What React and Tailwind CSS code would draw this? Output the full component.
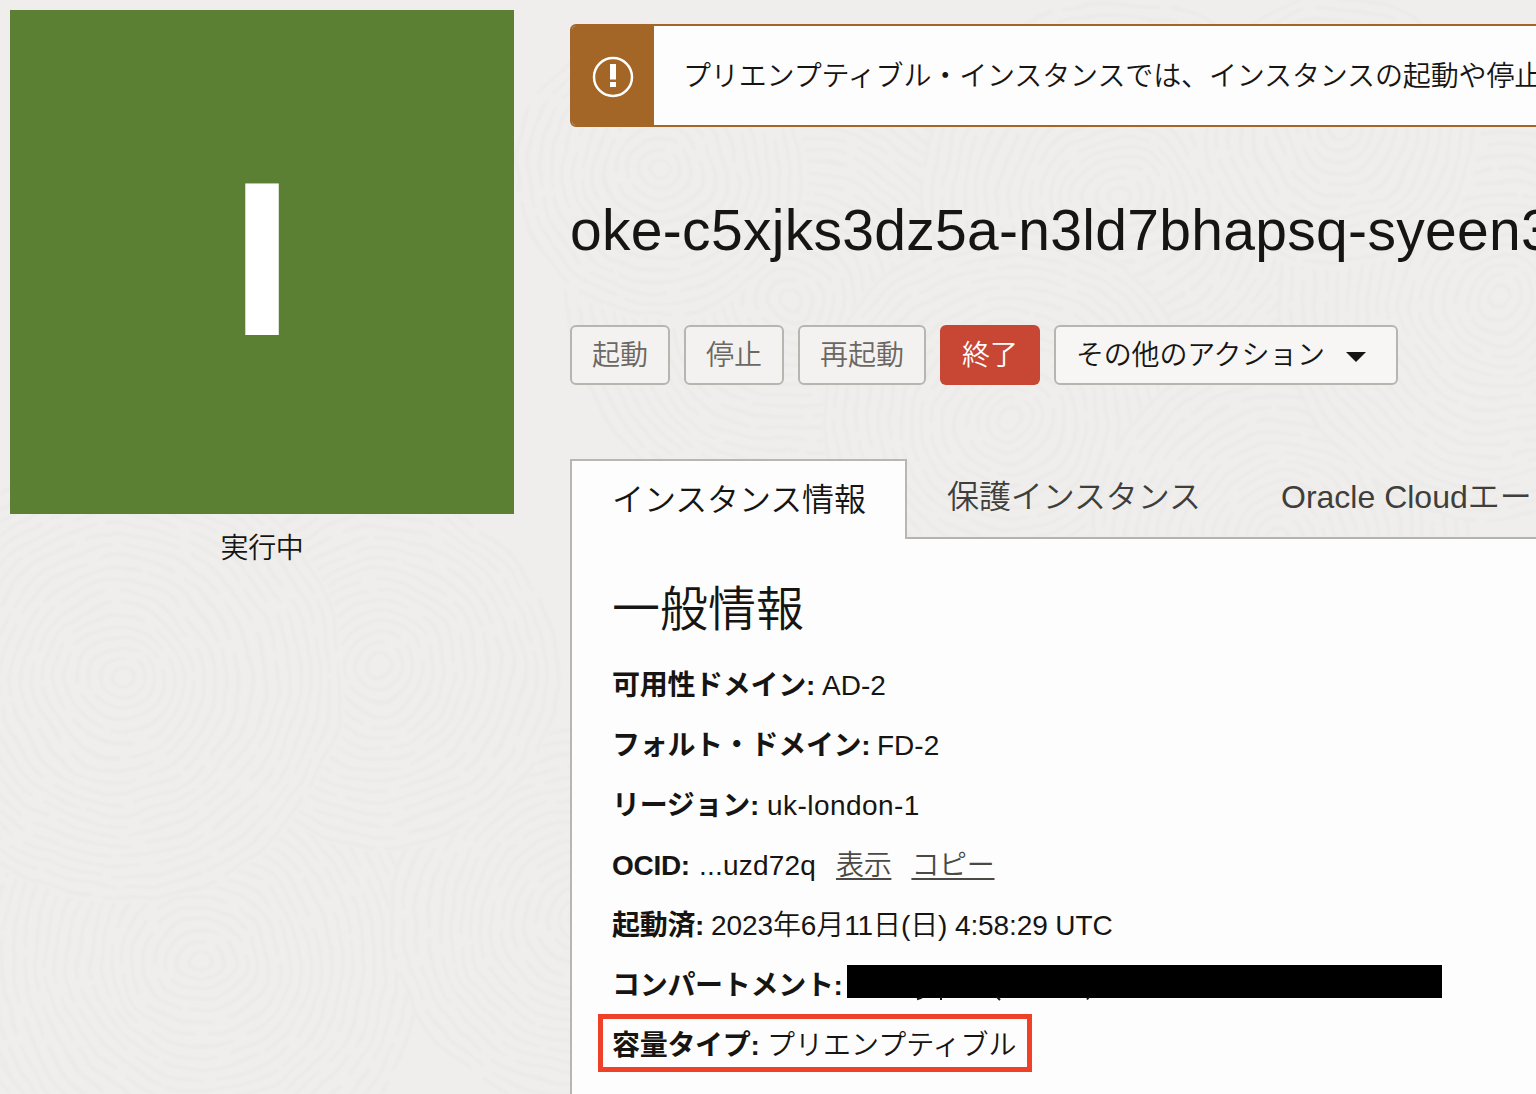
import React from 'react';

const actions = [
    { label: '起動', width: 'w-[100px]' },
    { label: '停止', width: 'w-[100px]' },
    { label: '再起動', width: 'w-[128px]' },
];

const details = [
    { label: '可用性ドメイン:', value: 'AD-2', labelClass: 'w-[203px]' },
    { label: 'フォルト・ドメイン:', value: 'FD-2', labelClass: 'w-[258px]' },
    { label: 'リージョン:', value: 'uk-london-1', labelClass: 'w-[148px]', valueClass: 'tracking-[0.45px]' },
    { label: 'OCID:', value: '...uzd72q', labelClass: 'w-[80px]', valueClass: 'tracking-[0.2px]', links: ['表示', 'コピー'] },
    { label: '起動済:', value: '2023年6月11日(日) 4:58:29 UTC', labelClass: 'w-[92px]', valueClass: 'tracking-[-0.1px]' },
    { label: 'コンパートメント:', labelClass: 'w-[228px]', redacted: true },
    { label: '容量タイプ:', value: 'プリエンプティブル', labelClass: 'w-[148px]', highlighted: true },
];

// Later swirls cover earlier ones, like overlapping scales
const swirls = [
    { x: 90, y: 1000, r: 240 },
    { x: 200, y: 960, r: 220 },
    { x: 790, y: 300, r: 230 },
    { x: 1120, y: 200, r: 200 },
    { x: 1010, y: 420, r: 190 },
    { x: 1280, y: 540, r: 190 },
    { x: 1500, y: 300, r: 220 },
    { x: 660, y: 170, r: 150 },
    { x: 1340, y: 130, r: 140 },
    { x: 580, y: 920, r: 190 },
    { x: 380, y: 670, r: 180 },
    { x: 120, y: 680, r: 225 },
];

export default function App() {
    return (
        <div className="relative isolate flex h-[1094px] w-[1536px] overflow-hidden whitespace-nowrap bg-[#efeeec] font-['Liberation_Sans','Noto_Sans_CJK_JP',sans-serif] font-[350] text-[#161513]">
            <Backdrop />

            <aside className="ml-[10px] mt-[10px] w-[504px] shrink-0">
                <div className="flex h-[504px] items-center justify-center bg-[#5b7f33]">
                    <span className="-mt-[7px] text-[218px] font-bold leading-none text-white [-webkit-text-stroke:2px_white]">I</span>
                </div>
                <p className="mt-[14px] text-center text-[28px] leading-[42px] tracking-[-0.3px]">実行中</p>
            </aside>

            <main className="ml-14 flex min-w-0 flex-1 flex-col pt-6">
                <div className="flex h-[103px] w-[1100px] shrink-0 overflow-hidden rounded-md border-2 border-[#a36626] bg-[#fdfdfd]">
                    <div className="flex w-[82px] shrink-0 items-center justify-center bg-[#a36626] pt-[2px]">
                        <AlertIcon />
                    </div>
                    <p className="pl-[29px] text-[28px] leading-[102px] tracking-[-0.13px]">
                        プリエンプティブル・インスタンスでは、インスタンスの起動や停止
                    </p>
                </div>

                <h1 className="mt-[63px] h-20 text-[57px] leading-[80px] tracking-[0.3px]">oke-c5xjks3dz5a-n3ld7bhapsq-syeen3</h1>

                <div className="mt-[55px] flex h-[60px] shrink-0 gap-[14px] text-[28px]">
                    {actions.map(action => (
                        <button key={action.label} className={`flex shrink-0 items-center justify-center rounded-md border-2 border-[#b8b5b1] bg-[#f4f2f1] pt-[2px] text-[#6b6762] ${action.width}`}>
                            {action.label}
                        </button>
                    ))}
                    <button className="flex w-[100px] shrink-0 items-center justify-center rounded-md bg-[#c74634] pt-[2px] text-white">終了</button>
                    <button className="flex w-[344px] shrink-0 items-center rounded-md border-2 border-[#b8b5b1] bg-[#f7f6f4] pt-[2px] pl-5 tracking-[-0.2px]">
                        その他のアクション
                        <svg className="ml-[21px] mt-px" width="20" height="10" viewBox="0 0 20 10">
                            <path d="M0 0H20L10 10Z" fill="#161513" />
                        </svg>
                    </button>
                </div>

                <nav className="mt-[74px] flex h-[80px] shrink-0 text-[32px] text-[#403e3b]">
                    <div className="w-[337px] shrink-0 border-2 border-b-0 border-[#bab5b1] bg-[#fdfdfd] pl-10 leading-[79px] tracking-[-0.1px] text-[#161513]">
                        インスタンス情報
                    </div>
                    <div className="flex flex-1 border-b-2 border-[#b5b3ae] pl-10 leading-[76px]">
                        <span className="w-[334px] shrink-0 tracking-[-0.1px]">保護インスタンス</span>
                        <span>Oracle Cloudエー</span>
                    </div>
                </nav>

                <section className="flex-1 border-l-2 border-[#bab5b1] bg-[#fdfdfd] pl-10 pt-[35px]">
                    <h2 className="h-[82px] text-[48px] leading-[72px]">一般情報</h2>
                    <dl className="text-[28px]">
                        {details.map(item => <DetailRow key={item.label} item={item} />)}
                    </dl>
                </section>
            </main>
        </div>
    );
}

function DetailRow({ item }) {
    return (
        <div className="relative flex h-[60px] items-center">
            {item.highlighted && (
                <div className="absolute -left-[14px] -top-[2px] h-[58px] w-[434px] border-[5px] border-[#ee4127]"></div>
            )}
            <dt className={`shrink-0 font-bold tracking-[-0.3px] ${item.labelClass}`}>{item.label}</dt>
            <dd className="flex items-center pl-[7px]">
                <span className={item.valueClass}>{item.value}</span>
                {item.links?.map(link => (
                    <a key={link} className="ml-5 tracking-[-0.3px] text-[#4b4946] underline decoration-2 underline-offset-[3px]">{link}</a>
                ))}
                {item.redacted && <Redaction />}
            </dd>
        </div>
    );
}

function Redaction() {
    return (
        <svg className="-mt-[9px]" width="595" height="40" viewBox="0 0 595 40">
            <rect y="3" width="595" height="33" fill="#000" />
            <path d="M70 37.2l5-1.6M94 35v3M150 35l3 3M242 35l-2 2.5" stroke="#161513" strokeWidth="2" fill="none" />
        </svg>
    );
}

function AlertIcon() {
    return (
        <svg width="42" height="42" viewBox="0 0 42 42" fill="none">
            <circle cx="21" cy="21" r="19" stroke="#fff" strokeWidth="2.5" />
            <path d="M18 8h6v15.500h-6zM18 26h6v5h-6z" fill="#fff" />
        </svg>
    );
}

function Backdrop() {
    return (
        <svg className="absolute inset-0 -z-10" width="1536" height="1094" viewBox="0 0 1536 1094" fill="none">
            <filter id="rough" x="0" y="0" width="1536" height="1094" filterUnits="userSpaceOnUse">
                <feTurbulence type="fractalNoise" baseFrequency="0.012" numOctaves="3" seed="4" />
                <feDisplacementMap in="SourceGraphic" scale="18" xChannelSelector="R" yChannelSelector="G" />
                <feGaussianBlur stdDeviation="1" />
            </filter>
            <g filter="url(#rough)">
                {swirls.map(s => (
                    <g key={`${s.x}-${s.y}`}>
                        <circle cx={s.x} cy={s.y} r={s.r} fill="#efeeec" />
                        {Array.from({ length: Math.floor(s.r / 11) }, (_, i) => (
                            <circle key={i} cx={s.x} cy={s.y} r={11 + i * 11} stroke="#ebeae8" strokeWidth="3.5" strokeDasharray={`${70 + (i * 37) % 60} ${6 + (i * 5) % 9}`} />
                        ))}
                    </g>
                ))}
            </g>
        </svg>
    );
}
